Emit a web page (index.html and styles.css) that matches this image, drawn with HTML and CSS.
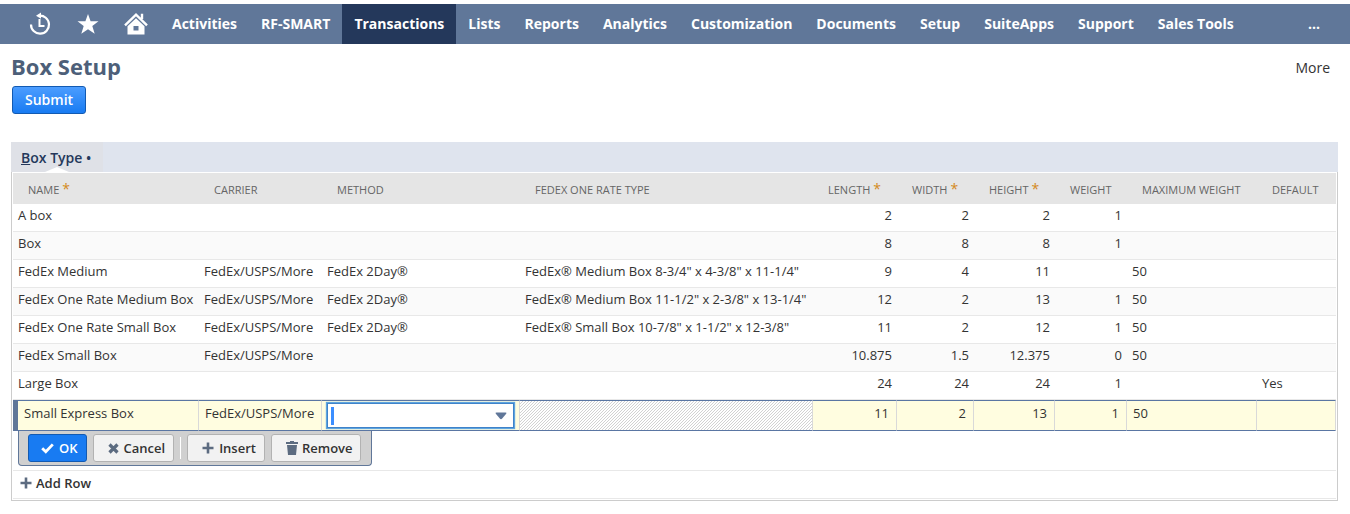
FILE: index.html
```html
<!DOCTYPE html>
<html lang="en">
<head>
<meta charset="utf-8">
<title>Box Setup</title>
<link rel="stylesheet" href="styles.css">
</head>
<body>
<nav class="nav" aria-label="Main">
  <a class="nav-icon" href="#" aria-label="Recent records">
    <svg width="22" height="24" viewBox="0 0 22 24" fill="none" stroke="#fff">
      <path d="M10 3.700A9 9 0 1 1 2 12.500" stroke-width="2.200"/>
      <path d="M10.500 7v7h5" stroke-width="2"/>
      <path d="M7 3.700 12 .6v6.200z" fill="#fff" stroke="none"/>
    </svg>
  </a>
  <a class="nav-icon" href="#" aria-label="Shortcuts">
    <svg width="22" height="22" viewBox="0 0 22 22" fill="#fff"><path d="M11 1l2.600 7.300H21.500l-6.200 4.800 2.400 7.600L11 16.200l-6.700 4.500 2.400-7.600L.5 8.300h7.900z"/></svg>
  </a>
  <a class="nav-icon" href="#" aria-label="Home">
    <svg width="24" height="22" viewBox="0 0 24 22">
      <path d="M1 12.300 12 1.700 23 12.300M18 6V.7" fill="none" stroke="#fff" stroke-width="2.400"/>
      <path d="M3.500 13.300 12 5.200l8.500 8.100V21.500h-17zM9.500 13v4.500h5V13z" fill="#fff" fill-rule="evenodd"/>
    </svg>
  </a>
  <a class="nav-link" href="#">Activities</a>
  <a class="nav-link" href="#">RF-SMART</a>
  <a class="nav-link nav-current" href="#" aria-current="page">Transactions</a>
  <a class="nav-link" href="#">Lists</a>
  <a class="nav-link" href="#">Reports</a>
  <a class="nav-link" href="#">Analytics</a>
  <a class="nav-link" href="#">Customization</a>
  <a class="nav-link" href="#">Documents</a>
  <a class="nav-link" href="#">Setup</a>
  <a class="nav-link" href="#">SuiteApps</a>
  <a class="nav-link" href="#">Support</a>
  <a class="nav-link" href="#">Sales Tools</a>
  <a class="nav-link nav-more" href="#">...</a>
</nav>
<main class="page">
  <header class="page-head">
    <h1 class="title">Box Setup</h1>
    <a class="more" href="#">More</a>
  </header>
  <button class="submit" type="button">Submit</button>
  <section class="sublist">
    <div class="tabs"><a class="tab" href="#"><span class="key">B</span>ox Type •</a></div>
    <div class="panel">
      <table class="grid">
        <colgroup>
          <col class="c-name"><col class="c-carrier"><col class="c-method"><col class="c-rate"><col class="c-length"><col class="c-width"><col class="c-height"><col class="c-weight"><col class="c-max"><col class="c-default">
        </colgroup>
        <thead>
          <tr><th>NAME<span class="req">*</span></th><th>CARRIER</th><th>METHOD</th><th>FEDEX ONE RATE TYPE</th><th>LENGTH<span class="req">*</span></th><th>WIDTH<span class="req">*</span></th><th>HEIGHT<span class="req">*</span></th><th>WEIGHT</th><th>MAXIMUM WEIGHT</th><th>DEFAULT</th></tr>
        </thead>
        <tbody>
          <tr><td>A box</td><td></td><td></td><td></td><td class="num">2</td><td class="num">2</td><td class="num">2</td><td class="num">1</td><td></td><td></td></tr>
          <tr><td>Box</td><td></td><td></td><td></td><td class="num">8</td><td class="num">8</td><td class="num">8</td><td class="num">1</td><td></td><td></td></tr>
          <tr><td>FedEx Medium</td><td>FedEx/USPS/More</td><td>FedEx 2Day®</td><td>FedEx® Medium Box 8-3/4" x 4-3/8" x 11-1/4"</td><td class="num">9</td><td class="num">4</td><td class="num">11</td><td class="num"></td><td>50</td><td></td></tr>
          <tr><td>FedEx One Rate Medium Box</td><td>FedEx/USPS/More</td><td>FedEx 2Day®</td><td>FedEx® Medium Box 11-1/2" x 2-3/8" x 13-1/4"</td><td class="num">12</td><td class="num">2</td><td class="num">13</td><td class="num">1</td><td>50</td><td></td></tr>
          <tr><td>FedEx One Rate Small Box</td><td>FedEx/USPS/More</td><td>FedEx 2Day®</td><td>FedEx® Small Box 10-7/8" x 1-1/2" x 12-3/8"</td><td class="num">11</td><td class="num">2</td><td class="num">12</td><td class="num">1</td><td>50</td><td></td></tr>
          <tr><td>FedEx Small Box</td><td>FedEx/USPS/More</td><td></td><td></td><td class="num">10.875</td><td class="num">1.5</td><td class="num">12.375</td><td class="num">0</td><td>50</td><td></td></tr>
          <tr><td>Large Box</td><td></td><td></td><td></td><td class="num">24</td><td class="num">24</td><td class="num">24</td><td class="num">1</td><td></td><td>Yes</td></tr>
          <tr class="editing"><td>Small Express Box</td><td>FedEx/USPS/More</td><td class="field-cell"><div class="combo"><span class="caret"></span><select class="combo-select" aria-label="Method"><option></option><option>FedEx 2Day®</option></select><svg class="combo-arrow" width="12" height="8" viewBox="0 0 12 8"><path d="M1.500 .5h9q1.500 0 .7 1.300L7.200 6.500Q6 7.800 4.800 6.500L.8 1.800Q0 .5 1.500 .5z" fill="#607799"/></svg></div></td><td class="disabled"></td><td class="num">11</td><td class="num">2</td><td class="num">13</td><td class="num">1</td><td>50</td><td></td></tr>
        </tbody>
      </table>
      <div class="actions-row">
        <div class="actions">
          <button class="btn btn-ok" type="button"><svg width="13" height="11" viewBox="0 0 13 11"><path d="M1.200 5.200 4.800 8.700 11.800 1.400" fill="none" stroke="#fff" stroke-width="2.800"/></svg>OK</button>
          <button class="btn btn-cancel" type="button"><svg width="11" height="11" viewBox="0 0 11 11"><path d="M1.500 1.500l8 8M9.500 1.500l-8 8" stroke="#5c6b80" stroke-width="3.200"/></svg>Cancel</button>
          <span class="divider"></span>
          <button class="btn btn-insert" type="button"><svg width="12" height="12" viewBox="0 0 12 12"><path d="M6 .5v11M.5 6h11" stroke="#5c6b80" stroke-width="2.600"/></svg>Insert</button>
          <button class="btn btn-remove" type="button"><svg width="12" height="14" viewBox="0 0 12 14" fill="#5c6b80"><path d="M0 1h4V0h4v1h4v2H0zM1 4h10l-1 10H2z"/></svg>Remove</button>
        </div>
      </div>
      <div class="add-row"><button class="add" type="button"><svg width="12" height="12" viewBox="0 0 12 12"><path d="M6 .5v11M.5 6h11" stroke="#5c6b80" stroke-width="2.600"/></svg>Add Row</button></div>
    </div>
  </section>
</main>
</body>
</html>
```
FILE: styles.css
```css
* { box-sizing: border-box; }
body { margin: 0; background: #fff; color: #333; font: 13px/20px "Open Sans", "Noto Sans", sans-serif; }
a { color: inherit; text-decoration: none; }
button { font: inherit; cursor: pointer; }

.nav { display: flex; height: 40px; margin-top: 4px; padding: 0 12px 0 16px; background: #607799; color: #fff; }
.nav-icon { display: flex; align-items: center; justify-content: center; width: 48px; }
.nav-link { padding: 0 12px; font-size: 14px; line-height: 40px; font-weight: 700; white-space: nowrap; }
.nav-current { background: #24385b; }
.nav-more { margin-left: auto; padding: 0 18px; }

.page { padding: 8px 12px 0 11px; }
.page-head { display: flex; justify-content: space-between; align-items: flex-start; padding: 0 8px 0 0; }
.title { margin: 0; font-size: 22px; line-height: 28px; font-weight: 700; color: #4d5f79; }
.more { font-size: 14px; line-height: 32px; }
.submit { display: block; height: 28px; margin: 2px 0 0 1px; padding: 0 12px; border: 1px solid #125ab2; border-radius: 3px; background: linear-gradient(#4c9dff, #187bf2); color: #fff; font-size: 14px; font-weight: 600; }

.sublist { margin-top: 28px; }
.tabs { display: flex; background: #dfe4ee; }
.tab { position: relative; padding: 2px 12px 0 10px; background: #dfe1e7; color: #24385b; font-size: 14px; line-height: 28px; font-weight: 600; }
.tab::after { content: ""; position: absolute; left: 50%; bottom: 0; margin-left: -12px; border: 12px solid transparent; border-top: 0; border-bottom: 5px solid #fff; }
.key { text-decoration: underline; }
.panel { padding: 1px; border: 1px solid #ccc; border-top: 0; }

.grid { width: 100%; table-layout: fixed; border-collapse: separate; border-spacing: 0; }
.c-name { width: 186px; }
.c-carrier { width: 123px; }
.c-method { width: 198px; }
.c-length { width: 84px; }
.c-width { width: 77px; }
.c-height { width: 81px; }
.c-weight { width: 72px; }
.c-max { width: 130px; }
.c-default { width: 79px; }
.grid th { height: 31px; padding: 3px 0 0 15px; background: #e5e5e5; color: #666; font-size: 11px; line-height: 20px; font-weight: 400; text-align: left; white-space: nowrap; }
.req { margin-left: 3px; color: #d48a1c; font-size: 14px; line-height: 10px; }
.grid td { height: 28px; padding: 0 5px 5px; border-bottom: 1px solid #e8e8e8; line-height: 20px; white-space: nowrap; }
.grid tbody tr:nth-child(even) td { background: #fafafa; }
.grid .num { text-align: right; }
.grid tbody tr.editing td { height: 31px; padding: 0 7px 5px 6px; border: solid #d9d9d9; border-width: 1px 1px 1px 0; border-top-color: #5a76a3; border-bottom-color: #5a76a3; background: #fffde0; }
.grid tbody tr.editing td:first-child { border-left: 5px solid #607799; }
.grid tbody tr.editing td.field-cell { padding: 1px 5px; }
.grid tbody tr.editing td.disabled { background: linear-gradient(135deg, #fff 40%, #d2d2d2 40% 60%, #fff 60%) 0 0 / 3px 3px; }

.combo { display: flex; align-items: center; height: 25px; padding: 0 6px 0 3px; border: 1px solid #3f83c9; background: #fff; box-shadow: 0 0 1px 1px #5fa5df; }
.caret { width: 3px; height: 18px; background: #3b8eff; }
.combo-select { flex: 1; min-width: 0; height: 20px; padding: 0 4px; border: 0; outline: 0; appearance: none; background: transparent; font: inherit; color: inherit; }

.actions-row { height: 40px; padding-left: 5px; border-bottom: 1px solid #e8e8e8; }
.actions { display: inline-flex; align-items: center; height: 35px; padding: 0 10px 0 9px; border: 1px solid #607799; border-top: 0; border-radius: 0 0 4px 4px; background: #d0d0d0; }
.btn { display: inline-flex; align-items: center; height: 28px; padding: 0 8px; border: 1px solid #b2b2b2; border-radius: 3px; background: #f2f2f2; color: #333; font-weight: 600; }
.btn svg { margin-right: 5px; }
.btn-ok { margin-right: 6px; padding-left: 12px; border-color: #125ab2; background: #187bf2; color: #fff; }
.btn-cancel { padding-left: 14px; }
.btn-insert { margin-right: 6px; padding-left: 14px; }
.btn-remove { padding: 0 7px 0 14px; }
.btn-remove svg { margin-right: 4px; }
.divider { width: 1px; height: 22px; margin: 0 6px; background: #fff; }
.add-row { display: flex; height: 28px; padding-left: 7px; border-bottom: 1px solid #e8e8e8; }
.add { display: flex; align-items: center; gap: 4px; height: 24px; padding: 0; border: 0; background: none; color: #333; font-weight: 600; }
```
